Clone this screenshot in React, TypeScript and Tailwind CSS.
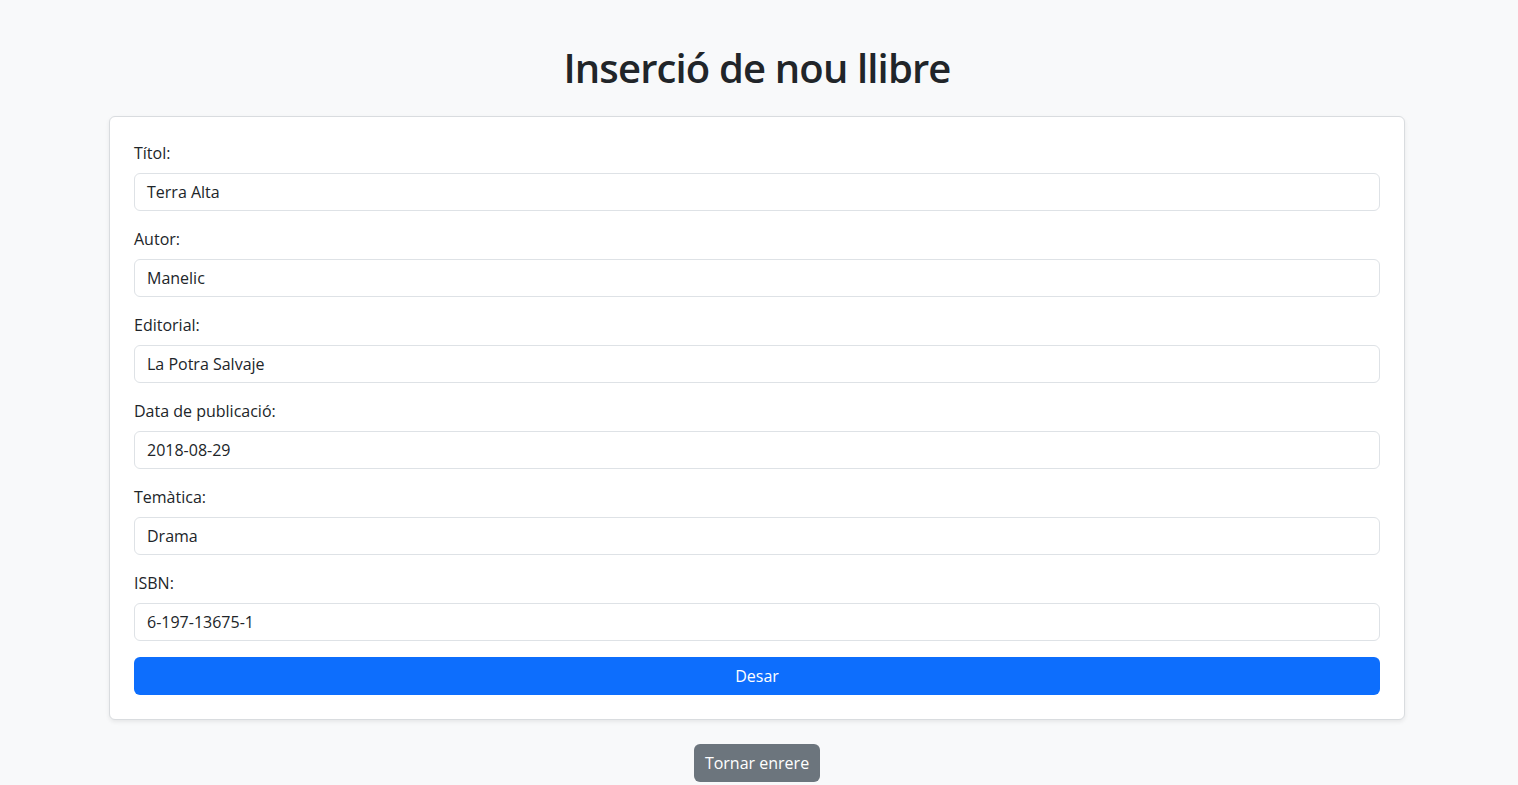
import React from "react";

const fields: [string, string][] = [
  ["Títol:", "Terra Alta"],
  ["Autor:", "Manelic"],
  ["Editorial:", "La Potra Salvaje"],
  ["Data de publicació:", "2018-08-29"],
  ["Temàtica:", "Drama"],
  ["ISBN:", "6-197-13675-1"],
];

export default function App() {
  return (
    <div
      className="min-h-[785px] bg-[#f8f9fa] text-[#212529]"
      style={{ fontFamily: '"Open Sans", sans-serif' }}
    >
      <div className="mx-auto w-[1296px] pt-[44px] pb-[3px] -translate-x-[2px]">
        <h1 className="text-center text-[40px] leading-[48px] font-semibold tracking-[-0.85px] mb-[24px]">
          Inserció de nou llibre
        </h1>
        <div className="bg-white border border-[#d9dcdf] rounded-[6px] shadow-[0_2px_4px_rgba(0,0,0,0.075)] p-[24px]">
          {fields.map(([label, value]) => (
            <div key={label} className="mb-[16px]">
              <div className="text-[16px] leading-[24px] mb-[8px]">{label}</div>
              <div className="h-[38px] border border-[#dee2e6] rounded-[6px] px-[12px] flex items-center text-[16px]">
                {value}
              </div>
            </div>
          ))}
          <div className="h-[38px] bg-[#0d6efd] text-white rounded-[6px] flex items-center justify-center text-[16px]">
            Desar
          </div>
        </div>
        <div className="flex justify-center mt-[24px]">
          <div className="h-[38px] bg-[#6c757d] text-white rounded-[6px] px-[11px] flex items-center text-[16px]">
            Tornar enrere
          </div>
        </div>
      </div>
    </div>
  );
}
